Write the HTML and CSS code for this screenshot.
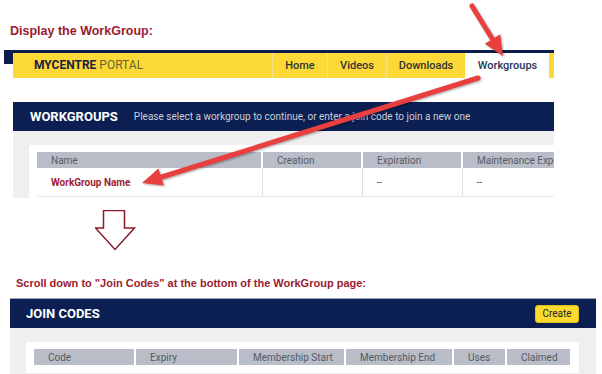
FILE: index.html
```html
<!DOCTYPE html>
<html lang="en">
<head>
    <meta charset="UTF-8">
    <meta name="viewport" content="width=device-width, initial-scale=1.0">
    <title>Display the WorkGroup</title>
    <link rel="stylesheet" href="styles.css">
</head>
<body>
    <div class="page">
        <p class="step-title">Display the WorkGroup:</p>

        <!-- Portal navigation bar -->
        <div class="nav-shot">
            <div class="nav-edge"></div>
            <nav class="navbar">
                <div class="brand"><strong>MYCENTRE</strong> PORTAL</div>
                <ul class="menu">
                    <li class="menu-home">Home</li>
                    <li class="menu-videos">Videos</li>
                    <li class="menu-downloads">Downloads</li>
                    <li class="menu-workgroups active">Workgroups</li>
                </ul>
            </nav>
        </div>

        <!-- Workgroups list -->
        <section class="panel workgroups">
            <div class="panel-head">
                <h2>WORKGROUPS</h2>
                <span class="panel-note">Please select a workgroup to continue, or enter a join code to join a new one</span>
            </div>
            <div class="panel-body">
                <div class="card">
                    <table class="grid wg-grid">
                        <colgroup>
                            <col style="width: 225px">
                            <col style="width: 100px">
                            <col style="width: 100px">
                            <col style="width: 135px">
                        </colgroup>
                        <thead>
                            <tr>
                                <th>Name</th>
                                <th>Creation</th>
                                <th>Expiration</th>
                                <th>Maintenance Expiration</th>
                            </tr>
                        </thead>
                        <tbody>
                            <tr>
                                <td><a class="wg-link" href="#">WorkGroup Name</a></td>
                                <td></td>
                                <td>--</td>
                                <td>--</td>
                            </tr>
                        </tbody>
                    </table>
                </div>
            </div>
        </section>

        <svg class="down-arrow" width="41" height="41" viewBox="0 0 41 41">
            <polygon points="8.5,0.5 29.5,0.5 29.5,18 39.5,18 20,39.5 0.5,18 8.5,18" />
        </svg>

        <p class="step-title small">Scroll down to "Join Codes" at the bottom of the WorkGroup page:</p>

        <!-- Join codes panel -->
        <section class="panel joincodes">
            <div class="panel-head">
                <h2>JOIN CODES</h2>
                <button class="btn-create">Create</button>
            </div>
            <div class="panel-body">
                <div class="card">
                    <table class="grid jc-grid">
                        <colgroup>
                            <col style="width: 101px">
                            <col style="width: 103px">
                            <col style="width: 107px">
                            <col style="width: 108px">
                            <col style="width: 53px">
                            <col style="width: 64px">
                        </colgroup>
                        <thead>
                            <tr>
                                <th>Code</th>
                                <th>Expiry</th>
                                <th>Membership Start</th>
                                <th>Membership End</th>
                                <th>Uses</th>
                                <th>Claimed</th>
                            </tr>
                        </thead>
                    </table>
                </div>
            </div>
        </section>

        <!-- Callout arrows drawn over the screenshot -->
        <svg class="callouts" width="602" height="374" viewBox="0 0 602 374">
            <line x1="472" y1="6" x2="493" y2="40" />
            <polygon points="503,56 484.8,43.7 500.2,34.3" />
            <line x1="478" y1="78" x2="160" y2="177.5" />
            <polygon points="142,183 163.8,185.6 158.4,168.4" />
        </svg>
    </div>
</body>
</html>
```

FILE: styles.css
```css
body {
    margin: 0;
    background: #fff;
    font-family: Roboto, "Liberation Sans", sans-serif;
}
.page {
    position: relative;
    width: 602px;
    height: 374px;
    overflow: hidden;
}
.step-title {
    margin: 0;
    padding: 23px 0 0 10px;
    font-family: "Liberation Sans", Arial, sans-serif;
    font-weight: bold;
    font-size: 12.5px;
    line-height: 16px;
    color: #9b1b30;
}
.step-title.small {
    margin-top: 25px;
    padding: 0 0 0 16px;
    font-size: 11px;
    line-height: 14px;
}

/* nav */
.nav-shot {
    display: flex;
    align-items: flex-start;
    width: 550px;
    margin: 11px 0 0 4px;
    border-top: 3px solid #0c1d4c;
}
.nav-edge {
    width: 9px;
    height: 11px;
    background: #0c1d4c;
}
.navbar {
    flex: 1;
    display: flex;
    height: 25px;
    background: #fdd937;
}
.brand {
    padding-left: 21px;
    width: 238px;
    font-size: 12px;
    line-height: 25px;
    color: #6b6434;
}
.brand strong {
    color: #1a2140;
}
.menu {
    display: flex;
    margin: 0;
    padding: 0;
    list-style: none;
}
.menu li {
    border-left: 1px solid #f3e38a;
    font-size: 11px;
    font-weight: 500;
    line-height: 25px;
    text-align: center;
    color: #333;
}
.menu-home { width: 54px; }
.menu-videos { width: 58px; }
.menu-downloads { width: 78px; }
.menu-workgroups { width: 83px; }
.menu li.active {
    background: #fff;
    border-left-color: #fff;
    color: #2b3658;
}

/* panels */
.panel.workgroups {
    width: 541px;
    margin: 24px 0 0 13px;
    overflow: hidden;
}
.panel.joincodes {
    width: 586px;
    margin: 8px 0 0 10px;
    border-top: 1px solid #9aa1b1;
}
.panel-head {
    display: flex;
    align-items: center;
    height: 29px;
    padding: 0 17px;
    background: #0c1f52;
    color: #fff;
}
.joincodes .panel-head {
    padding: 0 17px 0 16px;
}
.panel-head h2 {
    margin: 0;
    font-size: 13px;
    font-weight: bold;
}
.panel-note {
    margin-left: 16px;
    font-size: 10px;
    color: #c9cedb;
    white-space: nowrap;
}
.btn-create {
    margin-left: auto;
    width: 44px;
    height: 18px;
    padding: 0;
    border: 1px solid #e2bf1c;
    border-radius: 3px;
    background: #fddb2e;
    font-family: Roboto, sans-serif;
    font-size: 10px;
    color: #222;
}
.panel-body {
    padding: 14px 0 0 16px;
    background: #efefef;
}
.joincodes .panel-body {
    padding: 14px 17px 10px 16px;
}
.card {
    padding: 7px 0 1px 8px;
    background: #fff;
}
.joincodes .card {
    padding: 7px 9px 8px 8px;
}
.grid {
    border-collapse: collapse;
    table-layout: fixed;
    font-size: 10px;
    white-space: nowrap;
}
.grid th {
    height: 16px;
    padding: 0 0 0 14px;
    background: #b9bdc7;
    border-left: 2px solid #fff;
    font-weight: normal;
    text-align: left;
    color: #555b66;
    overflow: hidden;
}
.grid th:first-child {
    border-left: none;
}
.grid td {
    height: 28px;
    padding: 0 0 0 14px;
    border-left: 1px solid #dcdee3;
    border-bottom: 1px solid #e4e7ef;
    color: #555;
}
.grid td:first-child {
    border-left: none;
}
.wg-grid {
    width: 560px;
}
.wg-link {
    font-weight: bold;
    color: #a01c34;
    text-decoration: none;
}
.jc-grid {
    width: 536px;
}

.down-arrow {
    display: block;
    margin: 12px 0 0 95px;
}
.down-arrow polygon {
    fill: #fff;
    stroke: #8b1a2b;
    stroke-width: 1.5;
}

/* arrows on top */
.callouts {
    position: absolute;
    top: 0;
    left: 0;
    pointer-events: none;
    filter: drop-shadow(1px 1px 1px rgba(0, 0, 0, 0.35));
}
.callouts line {
    stroke: #ea3f3f;
    stroke-width: 5;
    stroke-linecap: round;
}
.callouts polygon {
    fill: #ea3f3f;
}
```
